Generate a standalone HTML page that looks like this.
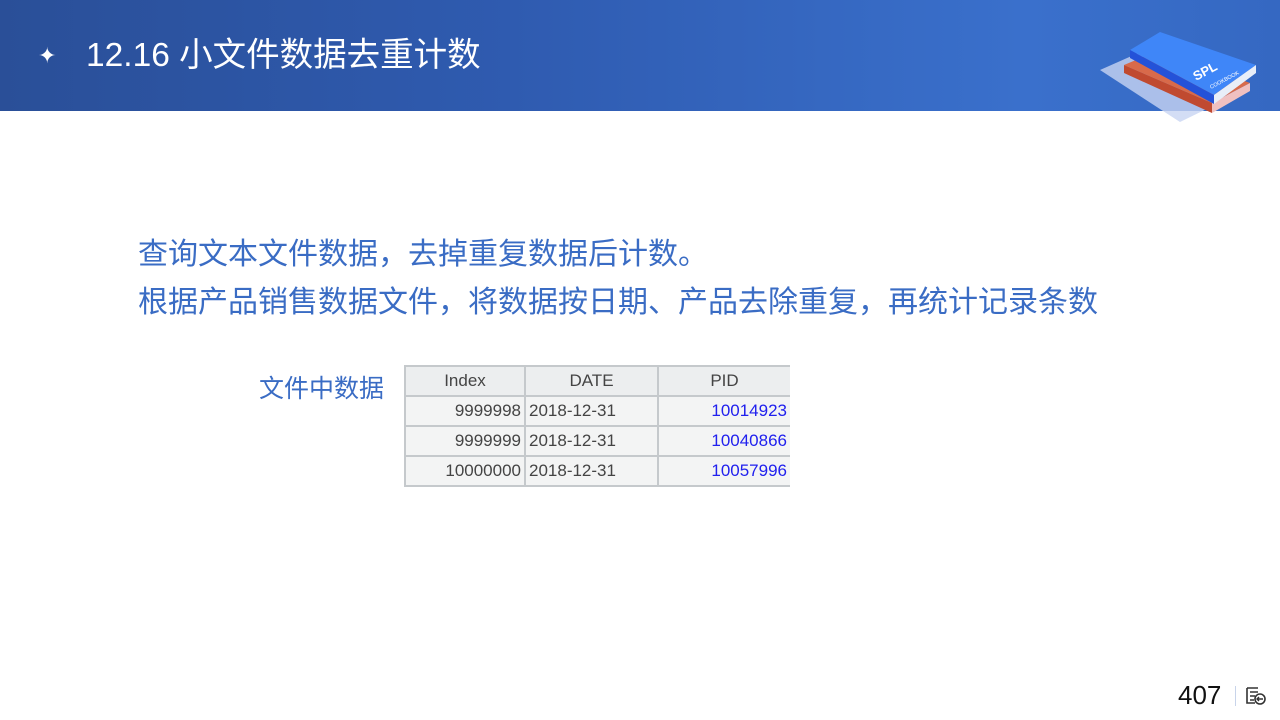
<!DOCTYPE html>
<html><head><meta charset="utf-8"><style>
body{margin:0;width:1280px;height:720px;background:#fff;position:relative;overflow:hidden;font-family:"Liberation Sans","Noto Sans CJK SC",sans-serif}
.hd{position:absolute;left:0;top:0;width:1280px;height:111px;background:linear-gradient(90deg,#2a4f98 0%,#2f5bb0 40%,#3a70cc 80%,#3568c2 100%)}
.t{position:absolute;left:86px;top:36px;color:#fff;font-size:33.5px;line-height:40px}
.star{position:absolute;left:38px;top:43px;color:#fff;font-size:22px}
.p{position:absolute;left:138px;color:#3a6cc4;font-size:30px;line-height:36px}
.lab{position:absolute;left:259px;top:369px;color:#3a6cc4;font-size:25px}
table{position:absolute;left:404px;top:365px;border-collapse:collapse;font-size:17px;color:#444;background:#f3f4f4}
td{border:2px solid #c5c9cc;height:28px;padding:0 3px}
tr:first-child td{text-align:center;background:#eceeef}
td:last-child{border-right:none}
.n{color:#2020ee;text-align:right}
.r{text-align:right}
</style></head><body>
<div class="hd"></div>
<div class="star">✦</div>
<div class="t">12.16 小文件数据去重计数</div>
<svg style="position:absolute;left:1100px;top:15px" width="160" height="110" viewBox="0 0 160 110">
<polygon points="0,55 45,35 125,85 80,107" fill="#c8d4f2" opacity="0.8"/>
<polygon points="24,50 60,35 150,68 112,88" fill="#d86a4a"/>
<polygon points="24,50 24,58 112,98 112,88" fill="#c04a30"/>
<polygon points="112,88 150,68 150,76 112,98" fill="#f0c0c0"/>
<polygon points="30,35 60,17 156,50 114,80" fill="#3f86f8"/>
<polygon points="30,35 30,43 114,89 114,80" fill="#2452d8"/>
<polygon points="114,80 156,50 156,58 114,89" fill="#e8eef8"/>
<text x="96" y="66" fill="#fff" font-size="13" font-weight="bold" transform="rotate(-28 96 66)">SPL</text>
<text x="111" y="74" fill="#fff" font-size="5.5" transform="rotate(-28 111 74)">COOKBOOK</text>
</svg>
<div class="p" style="top:237px">查询文本文件数据，去掉重复数据后计数。</div>
<div class="p" style="top:285px">根据产品销售数据文件，将数据按日期、产品去除重复，再统计记录条数</div>
<div class="lab">文件中数据</div>
<table>
<tr><td style="width:112px">Index</td><td style="width:125px">DATE</td><td style="width:125px">PID</td></tr>
<tr><td class="r">9999998</td><td>2018-12-31</td><td class="n">10014923</td></tr>
<tr><td class="r">9999999</td><td>2018-12-31</td><td class="n">10040866</td></tr>
<tr><td class="r">10000000</td><td>2018-12-31</td><td class="n">10057996</td></tr>
</table>
<div style="position:absolute;left:1178px;top:680px;font-size:26px;color:#111">407</div>
<div style="position:absolute;left:1235px;top:686px;width:1px;height:20px;background:#c8d4ea"></div>
<svg style="position:absolute;left:1245px;top:686px" width="22" height="20" viewBox="0 0 22 20"><path d="M2 2h11M2 2v15h8M5 6h8M5 10h5M5 14h4" stroke="#333" stroke-width="1.6" fill="none"/><circle cx="15" cy="13" r="5" fill="none" stroke="#333" stroke-width="1.6"/><path d="M18 13h-6M14 11l-2 2 2 2" stroke="#333" stroke-width="1.4" fill="none"/></svg>
</body></html>
